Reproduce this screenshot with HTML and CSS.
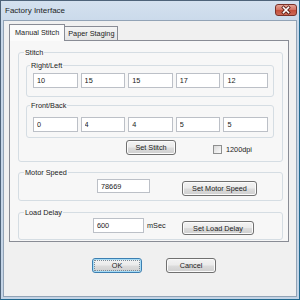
FILE: index.html
```html
<!DOCTYPE html>
<html>
<head>
<meta charset="utf-8">
<title>Factory Interface</title>
<link rel="stylesheet" href="styles.css">
</head>
<body>
<div class="window">
  <div class="titlebar">
    <span class="title">Factory Interface</span>
    <span class="close"><svg width="20" height="10" viewBox="0 0 20 10"><path d="M7.5 2.5 L12.5 7.5 M12.5 2.5 L7.5 7.5" stroke="#5a1f18" stroke-width="3.2" stroke-linecap="square"/><path d="M7.5 2.5 L12.5 7.5 M12.5 2.5 L7.5 7.5" stroke="#ffffff" stroke-width="1.6" stroke-linecap="square"/></svg></span>
  </div>
  <div class="client">
    <div class="tabs">
      <div class="tab active">Manual Stitch</div>
      <div class="tab">Paper Staging</div>
    </div>
    <div class="panel">
      <fieldset class="group stitch">
        <legend>Stitch</legend>
        <fieldset class="sub first">
          <legend>Right/Left</legend>
          <div class="cells">
            <input class="edit" value="10">
            <input class="edit" value="15">
            <input class="edit" value="15">
            <input class="edit" value="17">
            <input class="edit" value="12">
          </div>
        </fieldset>
        <fieldset class="sub second">
          <legend>Front/Back</legend>
          <div class="cells">
            <input class="edit" value="0">
            <input class="edit" value="4">
            <input class="edit" value="4">
            <input class="edit" value="5">
            <input class="edit" value="5">
          </div>
        </fieldset>
        <div class="stitch-actions">
          <button class="btn set-stitch">Set Stitch</button>
          <label class="check"><span class="box"></span>1200dpi</label>
        </div>
      </fieldset>
      <fieldset class="group motor">
        <legend>Motor Speed</legend>
        <div class="line">
          <input class="edit speed" value="78669">
          <button class="btn set-motor">Set Motor Speed</button>
        </div>
      </fieldset>
      <fieldset class="group load">
        <legend>Load Delay</legend>
        <div class="line">
          <input class="edit delay" value="600">
          <span class="unit">mSec</span>
          <button class="btn set-load">Set Load Delay</button>
        </div>
      </fieldset>
    </div>
    <div class="dialog-buttons">
      <button class="btn default">OK</button>
      <button class="btn">Cancel</button>
    </div>
  </div>
</div>
</body>
</html>
```
FILE: styles.css
```css
* { box-sizing: border-box; }
html, body { margin: 0; padding: 0; }
body {
  width: 300px;
  height: 300px;
  overflow: hidden;
  background: #ffffff;
  font-family: "Liberation Sans", Arial, sans-serif;
  font-size: 7.3px;
  color: #1b1b1b;
}
.window {
  width: 300px;
  height: 300px;
  border: 1px solid #4e6379;
  border-right-color: #22698f;
  border-bottom-color: #22698f;
  background: linear-gradient(#d4e1ef, #c6d6e8 30px, #c4d4e6);
  padding: 0 2px 2px;
  display: flex;
  flex-direction: column;
}
.titlebar {
  height: 19px;
  display: flex;
  align-items: flex-start;
}
.title {
  font-size: 8px;
  line-height: 19px;
  padding-left: 2px;
  color: #1e1e1e;
}
.close {
  margin-left: auto;
  margin-top: 3px;
  width: 22px;
  height: 12px;
  border: 1px solid #7a3128;
  border-radius: 3px;
  background: linear-gradient(#e5a597, #d47565 45%, #c4503c 55%, #cd6a58);
  display: flex;
  align-items: center;
  justify-content: center;
}
.close svg { display: block; }
.client {
  flex: 1;
  background: #f0f0f0;
  border: 1px solid #92a3b6;
  padding-top: 3px;
  display: flex;
  flex-direction: column;
}
.tabs {
  display: flex;
  align-items: flex-end;
  padding-left: 5px;
  height: 17px;
  margin-bottom: -1px;
}
.tab {
  height: 15px;
  padding: 0 3px;
  line-height: 13px;
  border: 1px solid #898c95;
  border-left: none;
  border-bottom: none;
  background: linear-gradient(#f4f4f4, #e4e4e4);
  white-space: nowrap;
}
.tab.active {
  height: 17px;
  padding: 0 5px;
  line-height: 16px;
  border-left: 1px solid #898c95;
  background: #fbfbfb;
  position: relative;
  z-index: 1;
}
.panel {
  margin: 0 7px 0 5px;
  border: 1px solid #898c95;
  background: #f7f7f7;
  padding: 7px 5px 1px 8px;
}
fieldset {
  margin: 0;
  min-width: 0;
  border: 1px solid #d5dde3;
  border-radius: 3px;
}
legend {
  padding: 0 1px;
  line-height: 9px;
}
.group legend { margin-left: -2px; }
.stitch { padding: 4px 8px 6px 7px; }
.sub { padding: 3px 5px 8px 6px; }
.sub legend { margin-left: -3px; }
.sub.second { margin-top: 4px; padding-top: 7px; padding-bottom: 5px; }
.cells {
  display: grid;
  grid-template-columns: repeat(5, 1fr);
  gap: 3px;
}
.edit {
  display: block;
  width: 100%;
  height: 15px;
  margin: 0;
  padding: 0 3px;
  border: 1px solid #bcc0c7;
  background: #ffffff;
  font: inherit;
  color: #1b1b1b;
  line-height: 13px;
  outline: none;
}
.btn {
  display: block;
  height: 15px;
  margin: 0;
  padding: 0;
  border: 1px solid #707070;
  border-radius: 3px;
  background: linear-gradient(#f3f3f3, #ebebeb 48%, #dcdcdc 52%, #cfcfcf);
  box-shadow: inset 0 0 0 1px #fbfbfb;
  font: inherit;
  color: #1b1b1b;
  line-height: 13px;
  white-space: nowrap;
}
.stitch-actions {
  display: flex;
  align-items: flex-start;
  margin-top: 2px;
  padding-left: 100px;
}
.set-stitch { width: 50px; }
.check {
  display: flex;
  align-items: center;
  gap: 4px;
  margin-left: 37px;
  margin-top: 5px;
  line-height: 9px;
}
.box {
  width: 9px;
  height: 9px;
  border: 1px solid #8e8f8f;
  background: linear-gradient(135deg, #d9d9d9, #fbfbfb);
}
.motor { margin-top: 6px; padding: 2px 8px 4px 7px; }
.load { margin-top: 7px; padding: 1px 8px 4px 7px; }
.line {
  display: flex;
  align-items: flex-start;
}
.speed { width: 53px; height: 14px; margin-left: 71px; }
.set-motor { width: 75px; margin-left: 32px; margin-top: 2px; }
.delay { width: 51px; margin-left: 67px; }
.unit { width: 38px; padding-left: 3px; line-height: 15px; }
.set-load { width: 72px; height: 14px; margin-top: 3px; }
.dialog-buttons {
  display: flex;
  gap: 24px;
  margin-top: 16px;
  padding-left: 88px;
}
.dialog-buttons .btn { width: 50px; }
.btn.default {
  border-color: #3c7fb1;
  box-shadow: inset 0 0 0 1px #a6dcf7;
  outline: 1px dotted #7a8a96;
  outline-offset: -3px;
}
```
